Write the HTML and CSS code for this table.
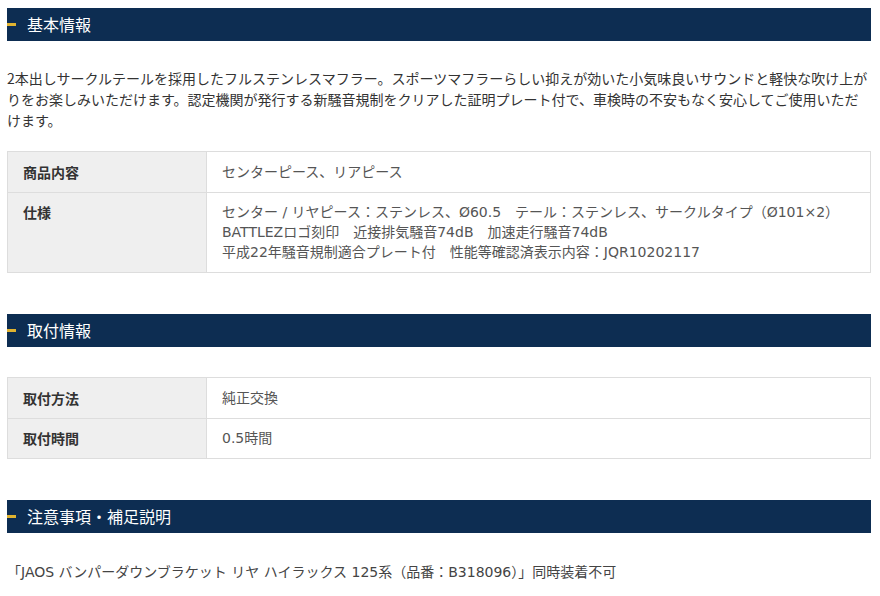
FILE: index.html
```html
<!DOCTYPE html>
<html lang="ja">
<head>
<meta charset="utf-8">
<title>商品情報</title>
<link rel="stylesheet" href="styles.css">
</head>
<body>
<section class="section">
  <h2 class="heading"><span class="accent"></span><span class="heading-text">基本情報</span></h2>
  <p class="intro">2本出しサークルテールを採用したフルステンレスマフラー。スポーツマフラーらしい抑えが効いた小気味良いサウンドと軽快な吹け上がりをお楽しみいただけます。認定機関が発行する新騒音規制をクリアした証明プレート付で、車検時の不安もなく安心してご使用いただけます。</p>
  <table class="spec">
    <tr><th>商品内容</th><td>センターピース、リアピース</td></tr>
    <tr><th>仕様</th><td>センター / リヤピース：ステンレス、Ø60.5　テール：ステンレス、サークルタイプ（Ø101×2）<br>BATTLEZロゴ刻印　近接排気騒音74dB　加速走行騒音74dB<br>平成22年騒音規制適合プレート付　性能等確認済表示内容：JQR10202117</td></tr>
  </table>
</section>
<section class="section">
  <h2 class="heading"><span class="accent"></span><span class="heading-text">取付情報</span></h2>
  <table class="spec spec-top">
    <tr><th>取付方法</th><td>純正交換</td></tr>
    <tr><th>取付時間</th><td>0.5時間</td></tr>
  </table>
</section>
<section class="section">
  <h2 class="heading"><span class="accent"></span><span class="heading-text">注意事項・補足説明</span></h2>
  <p class="note">「JAOS バンパーダウンブラケット リヤ ハイラックス 125系（品番：B318096）」同時装着不可</p>
</section>
</body>
</html>
```
FILE: styles.css
```css
html, body {
  background: #ffffff;
}
body {
  margin: 8px 9px 0 7px;
  font-family: "Noto Sans CJK JP", "Noto Sans", sans-serif;
  font-size: 14px;
  line-height: 21px;
  color: #333333;
}
.section {
  margin-bottom: 41px;
}
.heading {
  display: flex;
  align-items: center;
  gap: 11px;
  height: 33px;
  margin: 0;
  background: #0d2d52;
  color: #ffffff;
  font-size: 16px;
  font-weight: normal;
  line-height: 33px;
}
.accent {
  width: 9px;
  height: 3px;
  background: #e0b330;
  flex: none;
}
.intro {
  margin: 27px 0 20px;
}
.spec {
  width: 100%;
  border-collapse: collapse;
  line-height: 20px;
}
.spec-top {
  margin-top: 30px;
}
.spec th,
.spec td {
  border: 1px solid #dddddd;
  padding: 9.5px 15px 10px;
  vertical-align: top;
  text-align: left;
}
.spec th {
  width: 168px;
  background: #efefef;
  font-weight: bold;
  color: #333333;
}
.spec td {
  color: #555555;
  font-family: "DejaVu Sans", "Noto Sans CJK JP", sans-serif;
}
.note {
  margin: 29px 0 0;
  color: #444444;
  font-family: "DejaVu Sans", "Noto Sans CJK JP", sans-serif;
}
```
